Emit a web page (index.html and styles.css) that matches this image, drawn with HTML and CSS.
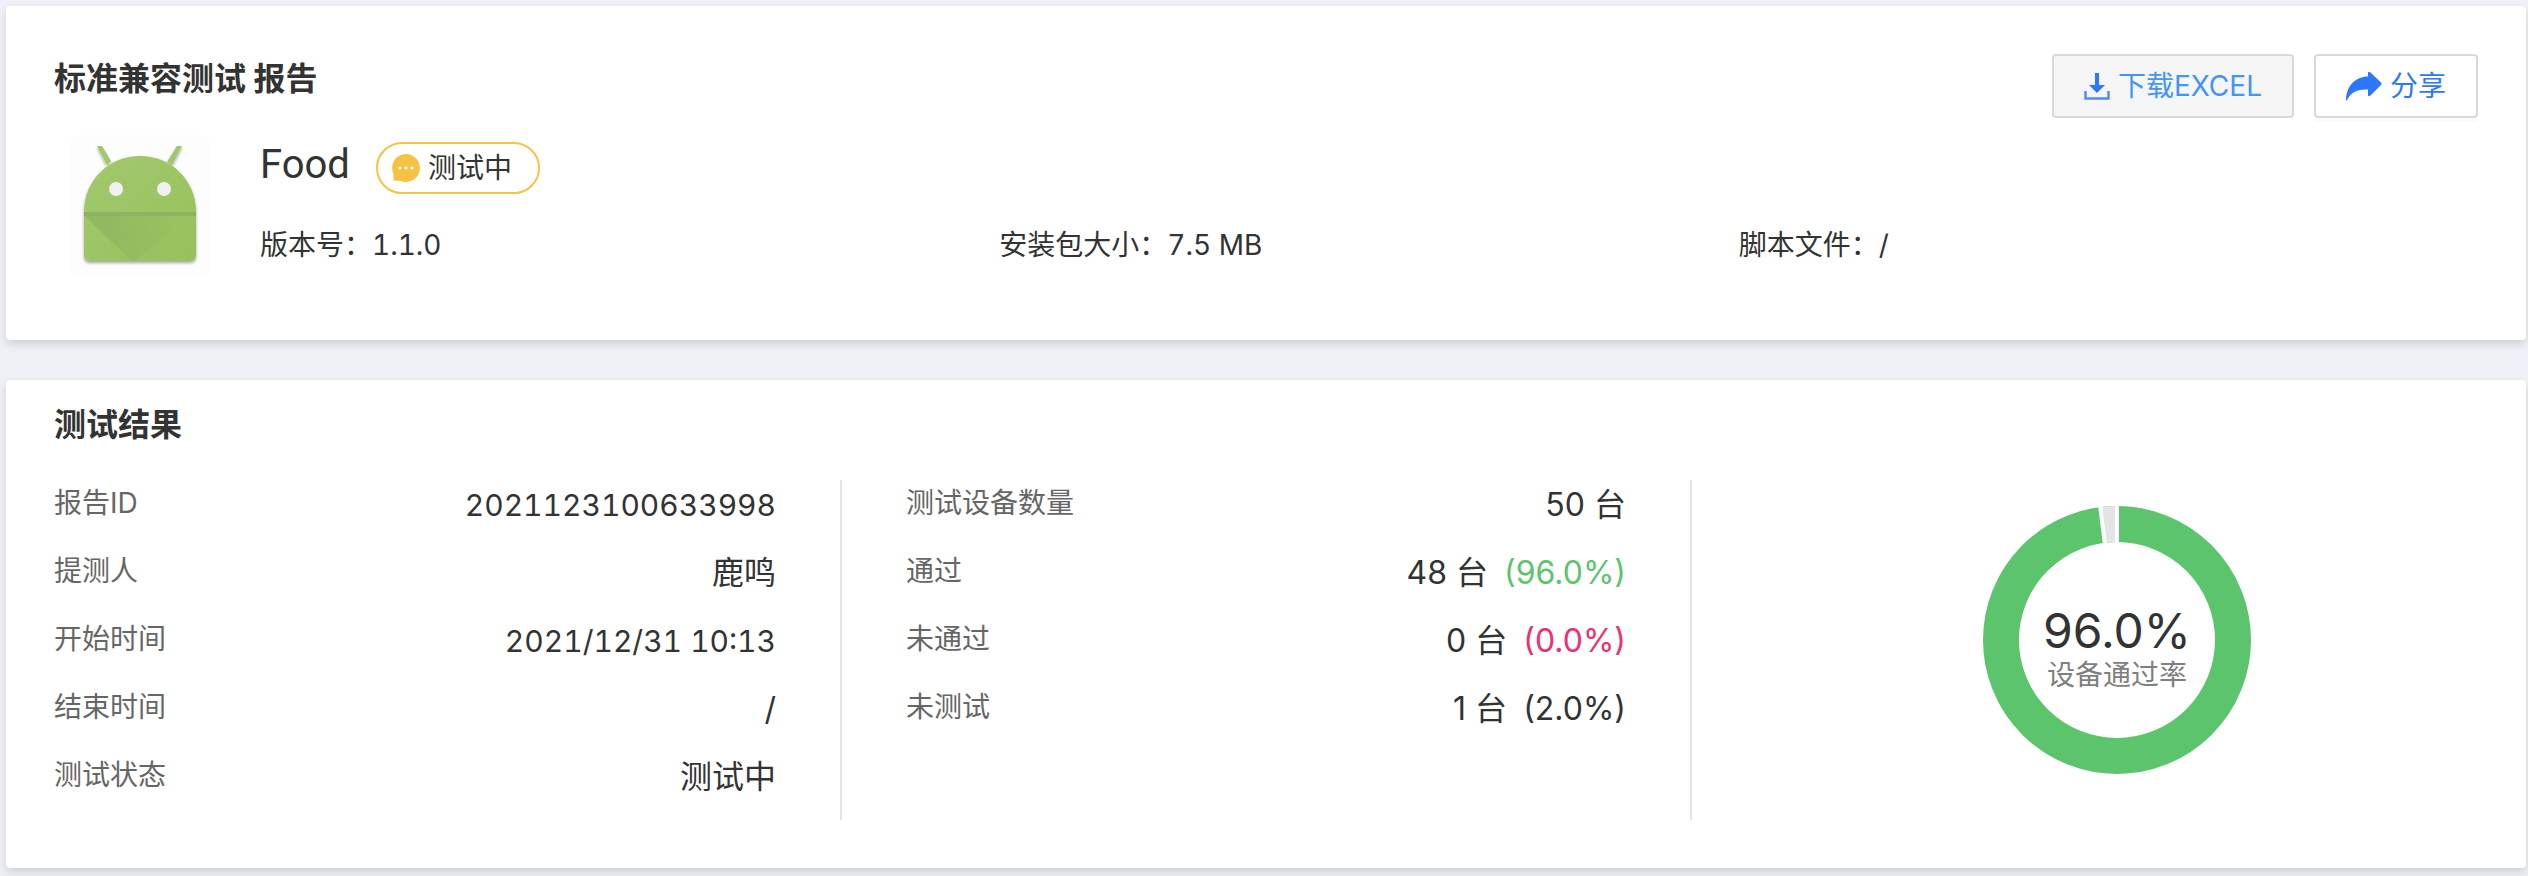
FILE: index.html
```html
<!DOCTYPE html>
<html lang="zh-CN">
<head>
<meta charset="utf-8">
<title>标准兼容测试 报告</title>
<link rel="stylesheet" href="styles.css">
</head>
<body>
<main class="page">
  <section class="card summary">
    <header class="card-head">
      <h1 class="title">标准兼容测试 报告</h1>
      <div class="actions">
        <button class="btn btn-download" type="button">
          <svg class="icon-download" viewBox="0 0 26 28" aria-hidden="true">
            <path d="M11 1h4v12h6l-8 8-8-8h6z" fill="#2d77fb"/>
            <path d="M1.500 19v7.500h23V19" fill="none" stroke="#4c8cf8" stroke-width="2.400"/>
          </svg>
          <span>下载EXCEL</span>
        </button>
        <button class="btn btn-share" type="button">
          <svg class="icon-share" viewBox="0 0 36 30" aria-hidden="true">
            <path d="M22 1.500Q22.500 0 24.500 1.500L35 11.500Q36.200 12.800 35 14L24.500 24.500Q22.500 26 22 24.500V18.500C12 18 4.500 21 1 29.500Q0 29.500 0 28C1 14 10 5.500 22 5.500z" fill="#2d77fb"/>
          </svg>
          <span>分享</span>
        </button>
      </div>
    </header>
    <div class="app">
      <svg class="app-icon" viewBox="0 0 140 140" role="img" aria-label="应用图标">
        <defs>
          <linearGradient id="body" x1="0" y1="0" x2="1" y2="1">
            <stop offset="0" stop-color="#a2c96d"/>
            <stop offset="1" stop-color="#97c15c"/>
          </linearGradient>
          <linearGradient id="fold" x1="0" y1="0" x2="1" y2="0">
            <stop offset="0" stop-color="#8bb05c"/>
            <stop offset="1" stop-color="#8bb05c" stop-opacity="0"/>
          </linearGradient>
          <filter id="drop" x="-10%" y="-10%" width="120%" height="125%">
            <feDropShadow dx="0" dy="2" stdDeviation="1.500" flood-color="#000" flood-opacity=".35"/>
          </filter>
        </defs>
        <rect x="1" y="0" width="138" height="139" rx="5" fill="#fdfdfd"/>
        <g filter="url(#drop)">
          <path d="M27 11h5l9 15-4 4zM107 11h5L102 30l-5-3z" fill="#a0c76b"/>
          <path d="M14 77C14 44 40 21 70 21s56 23 56 56v43q0 6-6 6H20q-6 0-6-6z" fill="url(#body)"/>
        </g>
        <path d="M14 77h112v4H62L14 81z" fill="#89ad5c" opacity=".7"/>
        <path d="M14 80h104L66 126h-4z" fill="url(#fold)" opacity=".75"/>
        <circle cx="46" cy="54" r="7" fill="#f1f1f1"/>
        <circle cx="94" cy="54" r="7" fill="#f1f1f1"/>
      </svg>
      <div class="app-body">
        <div class="app-name-row">
          <h2 class="app-name">Food</h2>
          <span class="tag">
            <svg class="icon-chat" viewBox="0 0 28 28" aria-hidden="true">
              <path d="M14 0a14 14 0 1 1-6 26.700H3q-1.500 0-1.500-1.500V20A14 14 0 0 1 14 0z" fill="#f5c242"/>
              <circle cx="8" cy="14" r="1.500" fill="#fff"/>
              <circle cx="14" cy="14" r="1.500" fill="#fff"/>
              <circle cx="20" cy="14" r="1.500" fill="#fff"/>
            </svg>
            <span>测试中</span>
          </span>
        </div>
        <div class="meta">
          <div>版本号：1.1.0</div>
          <div>安装包大小：7.5 MB</div>
          <div>脚本文件：/</div>
        </div>
      </div>
    </div>
  </section>

  <section class="card results">
    <h2 class="title">测试结果</h2>
    <div class="results-grid">
      <dl class="facts">
        <div class="fact"><dt>报告ID</dt><dd class="num">2021123100633998</dd></div>
        <div class="fact"><dt>提测人</dt><dd>鹿鸣</dd></div>
        <div class="fact"><dt>开始时间</dt><dd class="num">2021/12/31 10:13</dd></div>
        <div class="fact"><dt>结束时间</dt><dd>/</dd></div>
        <div class="fact"><dt>测试状态</dt><dd>测试中</dd></div>
      </dl>
      <dl class="facts facts-devices">
        <div class="fact"><dt>测试设备数量</dt><dd>50 台</dd></div>
        <div class="fact"><dt>通过</dt><dd>48 台<span class="rate rate-pass">(96.0%)</span></dd></div>
        <div class="fact"><dt>未通过</dt><dd>0 台<span class="rate rate-fail">(0.0%)</span></dd></div>
        <div class="fact"><dt>未测试</dt><dd>1 台<span class="rate">(2.0%)</span></dd></div>
      </dl>
      <div class="chart">
        <svg class="donut" viewBox="-135 -135 270 270" aria-hidden="true">
          <circle r="116" fill="none" stroke="#5cc46c" stroke-width="36"/>
          <path d="M0-134A134 134 0 0 0-16.800-132.900L-12.300-97.200A98 98 0 0 1 0-98z" fill="#e4e4e4"/>
          <path d="M0-96V-135M-12-95.200L-17-134.500" stroke="#fff" stroke-width="4"/>
        </svg>
        <div class="chart-label">
          <strong class="chart-value">96.0%</strong>
          <span class="chart-name">设备通过率</span>
        </div>
      </div>
    </div>
  </section>
</main>
</body>
</html>
```

FILE: styles.css
```css
* {
  box-sizing: border-box;
}

body {
  margin: 0;
  background: #f0f1f6;
  color: #333;
  font-family: Inter, "Noto Sans CJK SC", sans-serif;
  font-size: 28px;
  line-height: 40px;
}

h1, h2, dl, dd {
  margin: 0;
}

.page {
  display: flex;
  flex-direction: column;
  gap: 40px;
  padding: 6px 2px 8px 6px;
}

.card {
  background: #fff;
  border-radius: 4px;
  box-shadow: 0 4px 10px rgba(0, 0, 0, 0.14);
}

.title {
  font-size: 32px;
  line-height: 50px;
  font-weight: 700;
}

.summary {
  padding: 48px 48px 64px;
}

.card-head {
  display: flex;
  justify-content: space-between;
  align-items: flex-start;
}

.actions {
  display: flex;
  gap: 20px;
}

.btn {
  display: flex;
  align-items: center;
  gap: 8px;
  height: 64px;
  padding: 0 30px;
  border: 2px solid #d9d9d9;
  border-radius: 4px;
  background: #fff;
  color: #2d77fb;
  font: inherit;
  white-space: nowrap;
}

.btn-download {
  background: #f5f5f5;
  color: #4494f8;
}

.btn-share {
  box-shadow: 0 4px 0 rgba(0, 0, 0, 0.016);
}

.icon-download {
  width: 26px;
  height: 28px;
}

.icon-share {
  width: 36px;
  height: 30px;
}

.app {
  display: flex;
  align-items: flex-start;
  gap: 50px;
  margin-top: 16px;
  padding-left: 16px;
}

.app-icon {
  flex: none;
  width: 140px;
  height: 142px;
}

.app-body {
  flex: 1;
  padding-top: 8px;
}

.app-name-row {
  display: flex;
  align-items: flex-start;
  gap: 26px;
}

.app-name {
  font-family: Roboto, "Noto Sans CJK SC", sans-serif;
  font-size: 40px;
  line-height: 46px;
  font-weight: 400;
}

.tag {
  display: flex;
  align-items: center;
  gap: 8px;
  height: 52px;
  padding: 0 26px 0 14px;
  border: 2px solid #f5c242;
  border-radius: 26px;
}

.icon-chat {
  width: 28px;
  height: 28px;
}

.meta {
  display: grid;
  grid-template-columns: repeat(3, 1fr);
  margin-top: 31px;
  font-variant-numeric: tabular-nums;
}

.results {
  padding: 20px 0 48px 48px;
}

.results-grid {
  display: grid;
  grid-template-columns: 788fr 850fr 834fr;
  margin-top: 30px;
}

.facts {
  padding-right: 64px;
  border-right: 2px solid #e4e4e4;
}

.facts-devices {
  padding-left: 64px;
}

.fact {
  display: flex;
  justify-content: space-between;
  align-items: flex-start;
  padding-bottom: 18px;
  line-height: 50px;
}

.fact dt {
  color: #666;
  line-height: 46px;
}

.fact dd {
  font-size: 32px;
}

.fact .num {
  font-size: 30px;
  font-variant-numeric: tabular-nums;
}

.rate {
  margin-left: 16px;
}

.rate-pass {
  color: #5cc46c;
}

.rate-fail {
  color: #ee2f72;
}

.chart {
  display: grid;
  place-items: center;
  padding: 0 0 20px 16px;
}

.donut,
.chart-label {
  grid-area: 1 / 1;
}

.donut {
  width: 270px;
  height: 270px;
}

.chart-label {
  display: flex;
  flex-direction: column;
  align-items: center;
  padding-top: 22px;
}

.chart-value {
  font-size: 48px;
  line-height: 48px;
  font-weight: 400;
}

.chart-name {
  color: #7f7f7f;
}
```
